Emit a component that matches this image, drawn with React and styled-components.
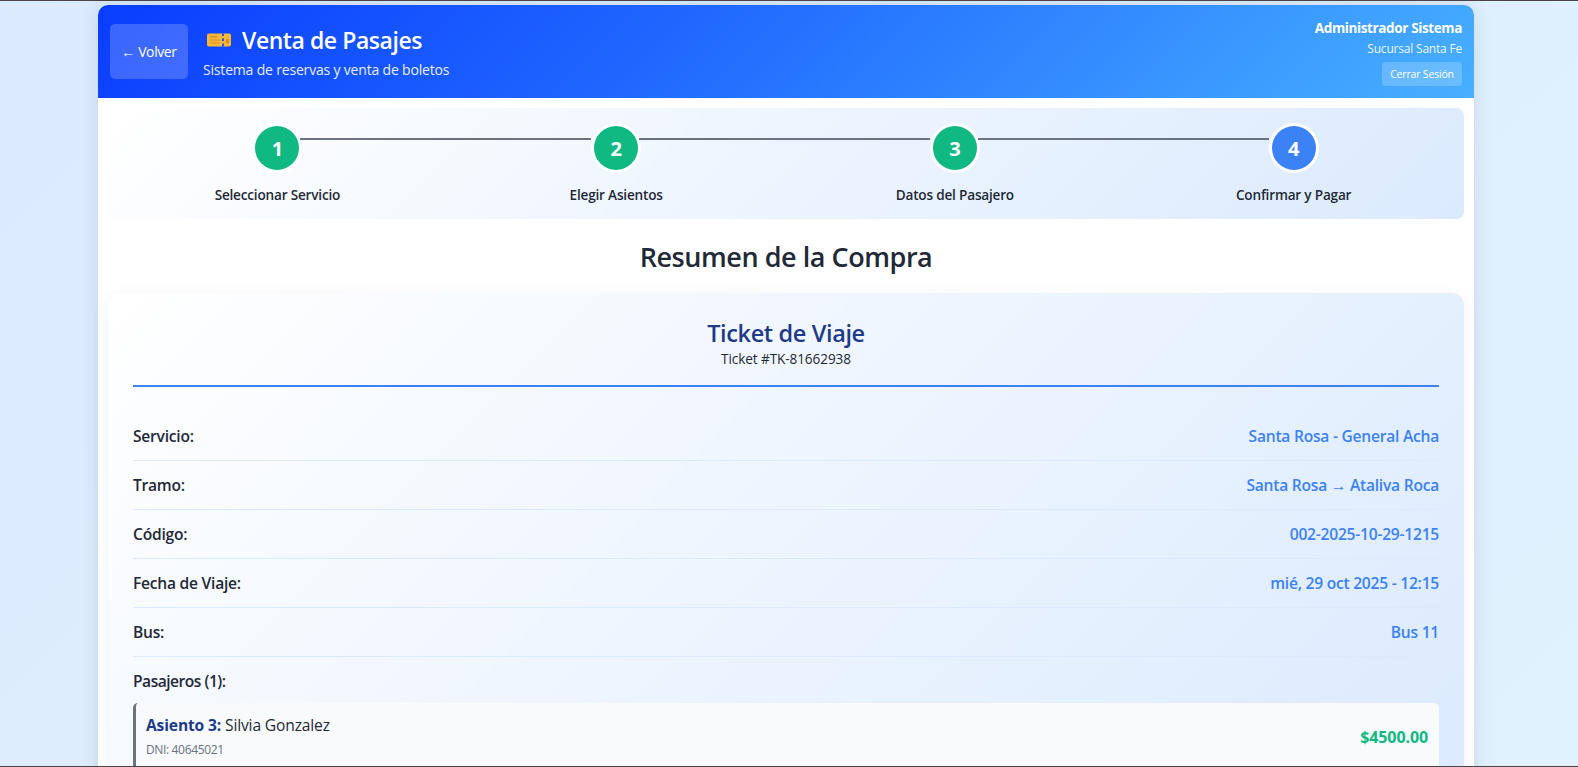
import React from 'react'
import styled, { createGlobalStyle } from 'styled-components'

const GlobalStyle = createGlobalStyle`
  * { box-sizing: border-box; }
  html, body { margin: 0; height: 767px; overflow: hidden; }
  body {
    font-family: "Open Sans", "Noto Sans", sans-serif;
    background: linear-gradient(135deg, #dbeafe 0%, #e0f2fe 100%);
    color: #1f2937;
  }
`

const Frame = styled.div`
  height: 767px;
  overflow: hidden;
  border-top: 1px solid #4a4446;
  border-bottom: 1px solid #4a4446;
  padding: 4px 0 0 98px;
`

const Page = styled.div`
  width: 1376px;
  background: #fff;
  border-radius: 10px 10px 0 0;
  box-shadow: 0 0 20px rgba(0, 0, 0, 0.1);
  height: 900px;
`

const Header = styled.header`
  height: 93px;
  padding: 0 12px;
  display: flex;
  align-items: center;
  justify-content: space-between;
  color: #fff;
  border-radius: 10px 10px 0 0;
  background: linear-gradient(135deg, #0a3dff 0%, #1f66ff 40%, #47b0ff 100%);
`

const HeaderLeft = styled.div`
  display: flex;
  align-items: center;
  gap: 15px;
`

const BackButton = styled.button`
  width: 78px;
  height: 55px;
  border: 0;
  border-radius: 5px;
  background: rgba(255, 255, 255, 0.2);
  color: #fff;
  font: inherit;
  font-size: 14px;
  letter-spacing: -0.4px;
`

const TitleBlock = styled.div`
  display: flex;
  flex-direction: column;
`

const Title = styled.h1`
  margin: 0;
  padding-left: 4px;
  display: flex;
  align-items: center;
  gap: 11px;
  font-size: 23px;
  line-height: 32px;
  font-weight: 600;
  letter-spacing: -0.44px;
`

const Subtitle = styled.p`
  margin: 5px 0 0;
  font-size: 14px;
  line-height: 18px;
  letter-spacing: -0.18px;
  opacity: 0.9;
`

const UserBlock = styled.div`
  display: flex;
  flex-direction: column;
  align-items: flex-end;
  padding-top: 2px;
`

const UserName = styled.div`
  font-size: 13.5px;
  font-weight: 700;
  line-height: 18px;
  letter-spacing: -0.38px;
`

const UserBranch = styled.div`
  margin-top: 4px;
  font-size: 12px;
  line-height: 16px;
  letter-spacing: -0.2px;
  opacity: 0.9;
`

const LogoutButton = styled.button`
  width: 80px;
  height: 24px;
  margin-top: 5px;
  padding: 0;
  border: 0;
  border-radius: 4px;
  background: rgba(255, 255, 255, 0.2);
  color: #fff;
  font: inherit;
  font-size: 10.5px;
  letter-spacing: -0.18px;
`

const Content = styled.main`
  padding: 10px;
`

const Stepper = styled.div`
  display: grid;
  grid-template-columns: repeat(4, 1fr);
  height: 111px;
  padding: 18px 1px 0 0;
  border-radius: 8px;
  background: linear-gradient(135deg, #ffffff 0%, #dbeafe 100%);
`

const Step = styled.div`
  position: relative;
  display: flex;
  flex-direction: column;
  align-items: center;
`

const Connector = styled.span`
  position: absolute;
  z-index: 2;
  top: 12px;
  left: calc(50% + 23px);
  width: calc(100% - 48px);
  height: 2px;
  background: #6b7280;
`

const Circle = styled.div`
  position: relative;
  z-index: 1;
  width: 44px;
  height: 44px;
  border-radius: 50%;
  display: flex;
  align-items: center;
  justify-content: center;
  font-size: 20px;
  font-weight: 700;
  color: #fff;
  background: ${(p) => (p.$active ? '#3b82f6' : '#10b981')};
  box-shadow: 0 0 0 3px #fff;
`

const StepLabel = styled.div`
  margin-top: 16px;
  font-size: 13.6px;
  line-height: 18px;
  font-weight: 600;
  letter-spacing: -0.2px;
`

const SectionTitle = styled.h2`
  margin: 20px 0 18px;
  text-align: center;
  font-size: 27px;
  line-height: 36px;
  font-weight: 600;
  letter-spacing: -0.45px;
`

const TicketCard = styled.section`
  padding: 24px 25px;
  border-radius: 12px;
  background: linear-gradient(135deg, #ffffff 0%, #dbeafe 100%);
  box-shadow: 0 4px 20px rgba(0, 0, 0, 0.05);
`

const TicketHead = styled.div`
  text-align: center;
  padding-bottom: 18px;
  border-bottom: 2px solid #3b82f6;
  margin-bottom: 25px;
`

const TicketTitle = styled.h3`
  margin: 0;
  font-size: 23.5px;
  line-height: 32px;
  font-weight: 600;
  letter-spacing: -0.37px;
  color: #1e3a8a;
`

const TicketNumber = styled.div`
  margin-top: 1px;
  font-size: 13.6px;
  line-height: 17px;
  letter-spacing: -0.1px;
`

const InfoRow = styled.div`
  display: flex;
  justify-content: space-between;
  align-items: center;
  height: 49px;
  border-bottom: 1px solid #dbeafe;
`

const InfoLabel = styled.span`
  font-size: 15.6px;
  font-weight: 600;
  letter-spacing: -0.24px;
`

const InfoValue = styled.span`
  font-size: 15.6px;
  font-weight: 600;
  letter-spacing: -0.24px;
  color: #3b82f6;
`

const PassengerHeading = styled.div`
  margin-top: 14px;
  font-size: 15.6px;
  line-height: 20px;
  font-weight: 600;
  letter-spacing: -0.5px;
`

const PassengerCard = styled.div`
  margin-top: 12px;
  padding: 12px 11px 12px 10px;
  display: flex;
  justify-content: space-between;
  align-items: center;
  border-left: 3px solid #6b7280;
  border-radius: 5px;
  background: #f8fafc;
`

const SeatLine = styled.div`
  font-size: 15.6px;
  line-height: 20px;
  letter-spacing: -0.15px;
  strong { color: #1e3a8a; font-weight: 700; }
`

const Dni = styled.div`
  margin-top: 7px;
  font-size: 12px;
  line-height: 16px;
  letter-spacing: -0.35px;
  color: #6b7280;
`

const Price = styled.div`
  font-size: 16px;
  font-weight: 700;
  letter-spacing: -0.1px;
  color: #10b981;
`

const TicketIcon = () => (
  <svg width="24" height="14" viewBox="0 0 24 14">
    <rect x="0" y="0.5" width="24" height="13" rx="2" fill="#fbb836" />
    <rect x="2.5" y="3" width="8" height="1.5" fill="#dc8f2e" />
    <rect x="2.5" y="6.5" width="11" height="1" fill="#dc8f2e" />
    <rect x="2.5" y="9.5" width="11" height="1" fill="#dc8f2e" />
    <rect x="15" y="0.5" width="2" height="2.5" fill="#1f55ff" />
    <rect x="15" y="5.5" width="2" height="2.5" fill="#1f55ff" />
    <rect x="15" y="10.5" width="2" height="3" fill="#1f55ff" />
    <rect x="19" y="6" width="3" height="4.5" fill="#dc8f2e" />
  </svg>
)

const steps = ['Seleccionar Servicio', 'Elegir Asientos', 'Datos del Pasajero', 'Confirmar y Pagar']

const rows = [
  ['Servicio:', 'Santa Rosa - General Acha'],
  ['Tramo:', 'Santa Rosa → Ataliva Roca'],
  ['Código:', '002-2025-10-29-1215'],
  ['Fecha de Viaje:', 'mié, 29 oct 2025 - 12:15'],
  ['Bus:', 'Bus 11'],
]

const App = () => (
  <>
    <GlobalStyle />
    <Frame>
      <Page>
        <Header>
          <HeaderLeft>
            <BackButton>← Volver</BackButton>
            <TitleBlock>
              <Title><TicketIcon />Venta de Pasajes</Title>
              <Subtitle>Sistema de reservas y venta de boletos</Subtitle>
            </TitleBlock>
          </HeaderLeft>
          <UserBlock>
            <UserName>Administrador Sistema</UserName>
            <UserBranch>Sucursal Santa Fe</UserBranch>
            <LogoutButton>Cerrar Sesión</LogoutButton>
          </UserBlock>
        </Header>
        <Content>
          <Stepper>
            {steps.map((s, i) => (
              <Step key={s}>
                {i < steps.length - 1 && <Connector />}
                <Circle $active={i === 3}>{i + 1}</Circle>
                <StepLabel>{s}</StepLabel>
              </Step>
            ))}
          </Stepper>
          <SectionTitle>Resumen de la Compra</SectionTitle>
          <TicketCard>
            <TicketHead>
              <TicketTitle>Ticket de Viaje</TicketTitle>
              <TicketNumber>Ticket #TK-81662938</TicketNumber>
            </TicketHead>
            {rows.map(([k, v]) => (
              <InfoRow key={k}>
                <InfoLabel>{k}</InfoLabel>
                <InfoValue>{v}</InfoValue>
              </InfoRow>
            ))}
            <PassengerHeading>Pasajeros (1):</PassengerHeading>
            <PassengerCard>
              <div>
                <SeatLine><strong>Asiento 3:</strong> Silvia Gonzalez</SeatLine>
                <Dni>DNI: 40645021</Dni>
              </div>
              <Price>$4500.00</Price>
            </PassengerCard>
          </TicketCard>
        </Content>
      </Page>
    </Frame>
  </>
)

export default App
